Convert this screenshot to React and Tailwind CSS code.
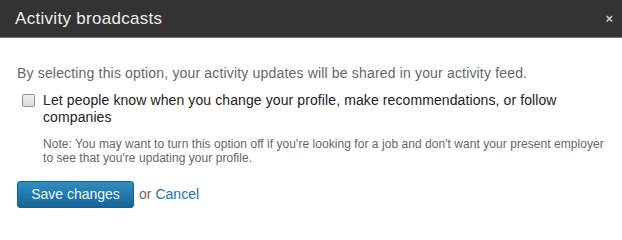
export default function App() {
  return (
    <div className="w-[622px] h-[240px] bg-white font-['Liberation_Sans',Arial,sans-serif]">
      <div className="h-[38px] bg-[#333333] border-b border-[#777777] flex items-center justify-between pl-[15px] pr-[9px]">
        <span className="text-[17px] text-[#eeeeee] tracking-[0.3px]">Activity broadcasts</span>
        <span className="text-[13px] text-[#cccccc] font-bold leading-none">×</span>
      </div>
      <div className="pl-[17px] pr-[14px] pt-[26px]">
        <p className="text-[14px] leading-[18px] text-[#666666] tracking-[0.17px]">
          By selecting this option, your activity updates will be shared in your activity feed.
        </p>
        <div className="flex items-start mt-[10px]">
          <div className="w-[13px] h-[13px] mt-[2px] ml-[5px] border border-[#8f8f8f] rounded-[2px] bg-gradient-to-b from-[#f0f0f0] to-[#dcdcdc] shrink-0" />
          <div className="ml-[8px] pr-[4px]">
            <p className="text-[14px] leading-[17px] text-[#222222] tracking-[0.1px] pr-[36px]">
              Let people know when you change your profile, make recommendations, or follow companies
            </p>
            <p className="text-[12px] leading-[14px] text-[#666666] tracking-[0.05px] mt-[11px]">
              Note: You may want to turn this option off if you're looking for a job and don't want your present employer to see that you're updating your profile.
            </p>
          </div>
        </div>
        <div className="flex items-center mt-[16px]">
          <button className="w-[117px] h-[27px] rounded-[3px] border border-[#1b5f8a] bg-gradient-to-b from-[#2f8dc2] to-[#176597] text-[14px] text-[#f0f6fa]">
            Save changes
          </button>
          <span className="ml-[5px] text-[14px] text-[#666666]">or</span>
          <span className="ml-[4px] text-[14px] text-[#2173ab]">Cancel</span>
        </div>
      </div>
    </div>
  );
}
